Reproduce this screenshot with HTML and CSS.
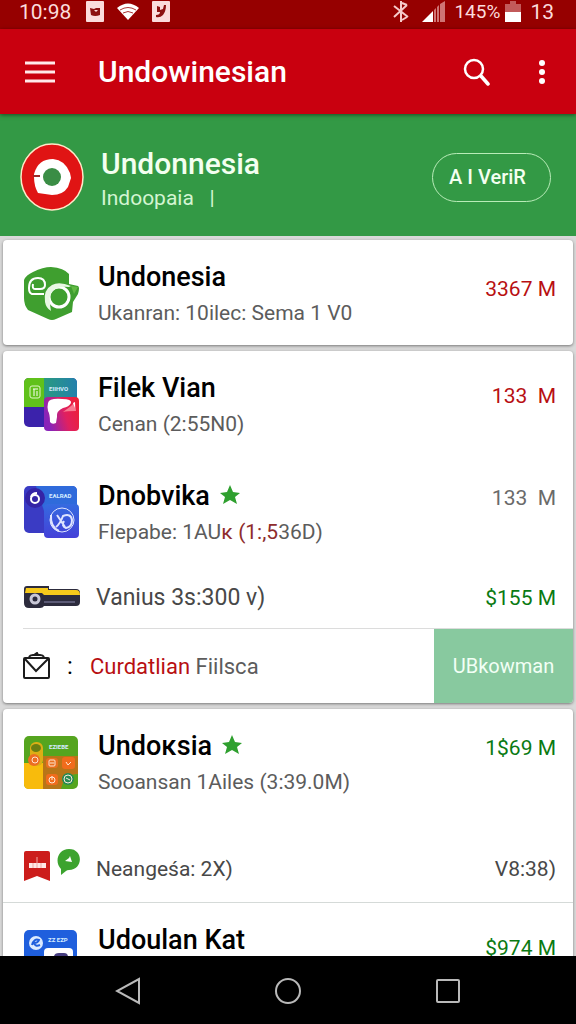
FILE: index.html
```html
<!DOCTYPE html>
<html lang="id">
<head>
    <meta charset="UTF-8">
    <meta name="viewport" content="width=device-width, initial-scale=1.0">
    <title>Undowinesian</title>
    <link rel="stylesheet" href="styles.css">
</head>
<body>
    <div class="status-bar">
        <span class="clock">10:98</span>
        <svg class="status-doc" width="18" height="21" viewBox="0 0 18 21"><rect width="18" height="21" rx="1" fill="#fbdcdc"/><path d="M4 7l4 1 2-1h4v7q-5 2-9 0z" fill="#8c1010"/><path d="M8 9l2 2 2-2" fill="#fbdcdc"/></svg>
        <svg class="status-wifi" width="22" height="18" viewBox="0 0 22 18"><path d="M0 5Q11-4 22 5L11 17z" fill="#fff"/><path d="M3 7q8-5 16 0M6 10q5-3 10 0" fill="none" stroke="#a33" stroke-width="1"/></svg>
        <svg width="18" height="21" viewBox="0 0 18 21"><rect width="18" height="21" rx="1" fill="#fbdcdc"/><path d="M5 5l3 1v3l3-1 1-4h2q0 6-3 10-3 3-7 2v-2q4 0 4-3l-3 0z" fill="#8c1010"/></svg>
        <span class="spacer"></span>
        <svg width="18" height="22" viewBox="0 0 18 22" fill="none" stroke="#f6caca" stroke-width="2"><path d="M9 0v21M2 5l14 11M2 16L15 4M10 2l5 2M10 19l5-3" /></svg>
        <svg class="status-signal" width="23" height="21" viewBox="0 0 23 21"><path d="M0 21L11 10v11z" fill="#fff"/><path d="M12 21V9l2-2v14zM15 21V6l2-2v17zM18 21V3l5-3v21z" fill="#cf7474"/></svg>
        <span class="battery-text">145%</span>
        <svg class="status-battery" width="16" height="21" viewBox="0 0 16 21"><path d="M5 0h6v3h5v8H0V3h5z" fill="#c25a5a"/><path d="M0 11h16v10H0z" fill="#fff"/></svg>
        <span>13</span>
    </div>

    <header class="app-bar">
        <button class="icon-btn" aria-label="Menu">
            <svg width="30" height="22" viewBox="0 0 30 22" stroke="#ffe9ea" stroke-width="3"><path d="M0 2h30M0 11h30M0 20h30"/></svg>
        </button>
        <h1>Undowinesian</h1>
        <button class="icon-btn search-btn" aria-label="Search">
            <svg width="28" height="28" viewBox="0 0 28 28" fill="none" stroke="#fff" stroke-width="2.5" stroke-linecap="round"><circle cx="11" cy="11" r="9"/><path d="M18 18l7 8" stroke-width="3.5"/></svg>
        </button>
        <button class="icon-btn" aria-label="More">
            <svg width="6" height="26" viewBox="0 0 6 26" fill="#fff"><circle cx="3" cy="4" r="3"/><circle cx="3" cy="13" r="3"/><circle cx="3" cy="22" r="3"/></svg>
        </button>
    </header>

    <section class="profile">
        <svg width="64" height="68" viewBox="0 0 64 68">
            <ellipse cx="32" cy="34" rx="31" ry="33" fill="#e01414" stroke="#ffe9c8" stroke-width="1.5"/>
            <path d="M14 31q4-15 19-15 12 1 17 14l1 5-3 9q-5 8-16 8l-14-2q-4-7-4-16z" fill="#fff"/>
            <path d="M13 33h7" stroke="#9c2a2a" stroke-width="2"/>
            <circle cx="32" cy="34" r="9" fill="#3a8d45"/>
        </svg>
        <div class="profile-text">
            <h2>Undonnesia</h2>
            <p>Indoopaia &nbsp; |</p>
        </div>
        <button class="verify-btn">A I VeriR</button>
    </section>

    <main class="list">
        <article class="card card-single">
            <div class="row">
                <svg class="thumb" width="56" height="54" viewBox="0 0 56 54">
                    <path d="M27 0Q40 1 45 7v10l9 2q2 1 0 8l-5 8-1 10-16 7q-4 2-8 0L4 43Q0 38 0 31V13Q2 8 9 5q10-5 18-5z" fill="#3f9f2f"/>
                    <path d="M47 19l7 1-4 7z" fill="#62b944"/>
                    <path d="M20 27H8q-3-1-3-6 0-10 9-10 7 0 7 7 0 4-5 4h-5q-3 0-2-5" fill="none" stroke="#fff" stroke-width="2"/>
                    <circle cx="35" cy="30" r="10" fill="none" stroke="#fff" stroke-width="3"/>
                    <path d="M47 19q-12-5-19-1-9 5-7 17 1 6 6 9-1-5-1-9-2-9 5-13 6-3 14-2z" fill="#e8f7e3"/>
                </svg>
                <div class="row-text">
                    <h3>Undonesia</h3>
                    <p>Ukanran: 10ilec: Sema 1 V0</p>
                </div>
                <span class="amount amount-mid red">3367 M</span>
            </div>
        </article>

        <article class="card">
            <div class="row">
                <svg class="thumb" width="56" height="54" viewBox="0 0 56 54">
                    <defs>
                        <linearGradient id="teal" x1="0" x2="1"><stop offset="0" stop-color="#2a9a80"/><stop offset="1" stop-color="#2380ac"/></linearGradient>
                        <linearGradient id="pink" x1="0" x2="1" y1="0.3"><stop offset="0" stop-color="#8a24b8"/><stop offset="0.5" stop-color="#e02060"/><stop offset="1" stop-color="#f02030"/></linearGradient>
                    </defs>
                    <rect width="53" height="49" rx="5" fill="#3b22ab"/>
                    <path d="M20 0h28q5 0 5 5v24H20z" fill="url(#teal)"/>
                    <path d="M5 0h15v29H0V5q0-5 5-5z" fill="#60c11b"/>
                    <rect x="6" y="8" width="10" height="12" rx="2" fill="none" stroke="#dff7c8"/><path d="M9 11h5M10 11v7M13 13v5" stroke="#fff" stroke-width="1"/>
                    <text class="thumb-label" x="25" y="13">EIIHVO</text>
                    <rect x="20" y="19" width="35" height="34" rx="4" fill="url(#pink)"/>
                    <path d="M24 25q1-5 14-4 10 0 9 4-2 4-8 5-7 3-6 9l-1 6q-4 2-6-1 0-8-2-11-1-4 0-8z" fill="#fff"/><path d="M47 28l4-4 1 9q-9 0-13 1z" fill="#f87b92"/><path d="M49 25l2-1v6z" fill="#fff"/>
                </svg>
                <div class="row-text">
                    <h3>Filek Vian</h3>
                    <p>Cenan (2:55N0)</p>
                </div>
                <span class="amount amount-low red">133 &nbsp;M</span>
            </div>
            <div class="row">
                <svg class="thumb" width="56" height="54" viewBox="0 0 56 54">
                    <defs><linearGradient id="blue" x1="0" x2="0" y1="0" y2="1"><stop offset="0" stop-color="#356be0"/><stop offset="1" stop-color="#4440d8"/></linearGradient></defs>
                    <rect width="53" height="47" rx="5" fill="#3a3bc4"/>
                    <path d="M12 0h36q5 0 5 5v20H20z" fill="#2f6bdb"/>
                    <circle cx="11" cy="12" r="10" fill="#3424a6"/><circle cx="11" cy="13" r="4" fill="none" stroke="#fff" stroke-width="2"/><path d="M7 11q1-4 6-4" fill="none" stroke="#fff" stroke-width="2"/>
                    <text class="thumb-label" x="25" y="12">EALRAD</text>
                    <rect x="20" y="18" width="35" height="34" rx="4" fill="url(#blue)"/>
                    <g fill="none" stroke="#dfe4ff" stroke-width="2"><circle cx="38" cy="34" r="12" stroke-width="1"/><path d="M27 29q-1 12 8 16M33 29l8 12M32 41q4-3 7-11 8-3 9 4 0 7-6 8-5-2-2-7"/></g>
                </svg>
                <div class="row-text">
                    <h3>Dnobvika <svg class="star" width="20" height="20" viewBox="0 0 20 20"><path d="M10 0l3 7 7 1-5 4 2 7-7-4-7 4 2-7-5-4 7-1z"/></svg></h3>
                    <p>Flepabe: 1AU<span class="red-soft">ĸ (1:,5</span>36D)</p>
                </div>
                <span class="amount">133 &nbsp;M</span>
            </div>
            <div class="row row-small">
                <svg width="56" height="24" viewBox="0 0 56 24">
                    <path d="M3 0h22v3h27q4 0 4 4v9q0 4-4 4H20q-1 2-4 2H5q-5 0-5-5V3q0-3 3-3z" fill="#2c2b3d"/>
                    <path d="M2 2h22v2h28q4 0 4 5H20l-2-2H1z" fill="#f6c91b"/>
                    <path d="M20 16h31" stroke="#8b8bb0"/>
                    <circle cx="11" cy="13" r="4" fill="#2c2b3d" stroke="#c8c7d6" stroke-width="3"/>
                </svg>
                <p class="line-text">Vanius 3s:300 ν)</p>
                <span class="amount green">$155 M</span>
            </div>
            <div class="row action-row">
                <svg width="27" height="28" viewBox="0 0 27 28" fill="none" stroke="#1c1c1c" stroke-width="2"><rect x="1" y="6" width="25" height="20" rx="1"/><path d="M2 7l11 12L25 7M6 5q1-2 4-2h7q3 0 4 2M11 3l3-2 1 2"/></svg>
                <span class="colon">:</span>
                <p class="action-text"><span class="red">Curdatlian</span> Fiilsca</p>
                <button class="action-btn">UBkowman</button>
            </div>
        </article>

        <article class="card">
            <div class="row">
                <svg class="thumb" width="56" height="54" viewBox="0 0 56 54">
                    <rect width="54" height="53" rx="5" fill="#55a51f"/>
                    <path d="M0 27h19v26H5q-5 0-5-5z" fill="#f8bb0c"/>
                    <path d="M19 20h35v18q-14 0-17 15H19z" fill="#b87518"/>
                    <rect x="6" y="6" width="13" height="24" rx="6" fill="#dcae15"/>
                    <ellipse cx="12" cy="12" rx="5" ry="4" fill="#6b7f12"/><circle cx="10" cy="24" r="6" fill="#ec6e21"/><circle cx="11" cy="24" r="3" fill="none" stroke="#ffe1cf"/>
                    <text class="thumb-label" x="25" y="13">EZIEBE</text>
                    <rect x="22" y="22" width="12" height="10" rx="3" fill="#e9701f"/><rect x="38" y="21" width="13" height="12" rx="3" fill="#f06c1c"/><rect x="22" y="38" width="12" height="11" rx="3" fill="#f06c1c"/><circle cx="44" cy="43" r="6" fill="#278b55"/>
                    <g fill="none" stroke="#ffe9d8"><rect x="25" y="24" width="6" height="6" rx="1"/><path d="M26 27h4M42 26l2 3 3-3"/><circle cx="28" cy="44" r="3"/><circle cx="44" cy="43" r="4"/><path d="M28 40v4M42 42l4 2"/></g>
                </svg>
                <div class="row-text">
                    <h3>Undoĸsia <svg class="star" width="20" height="20" viewBox="0 0 20 20"><path d="M10 0l3 7 7 1-5 4 2 7-7-4-7 4 2-7-5-4 7-1z"/></svg></h3>
                    <p>Sooansan 1Ailes (3:39.0M)</p>
                </div>
                <span class="amount green">1$69 M</span>
            </div>
            <div class="row row-message">
                <svg class="badges" width="56" height="34" viewBox="0 0 56 34">
                    <path d="M2 3h22q2 0 2 2v28l-13-5-13 5V5q0-2 2-2z" fill="#cc1d1b"/>
                    <path d="M5 15h17v5H5z" fill="#ffe8e6"/><path d="M13 9v11M9 15v5M17 15v5" stroke="#f0aaa6"/>
                    <path d="M45 1c15 0 14 21 0 21q-2 0-3 1l-5 4v-6C30 14 34 1 45 1z" fill="#3ca32e"/>
                    <path d="M41 13l4-3 1-2 2 6z" fill="#fff"/>
                </svg>
                <p class="line-text">Neangeśa: 2X)</p>
                <span class="amount grey-dark">V8:38)</span>
            </div>
            <div class="row row-divided">
                <svg class="thumb" width="56" height="54" viewBox="0 0 56 54">
                    <rect width="53" height="53" rx="5" fill="#1f5fdd"/>
                    <circle cx="12" cy="13" r="7" fill="#dcebff"/><path d="M8 15q2-7 7-5-1 3-5 3 1 4 6 2" fill="none" stroke="#1f5fdd" stroke-width="2"/>
                    <text class="thumb-label" x="24" y="12">ZZ EZP</text>
                    <rect x="20" y="18" width="29" height="34" rx="4" fill="#fff"/><path d="M30 27q0-4 5-4h5q4 0 4 4z" fill="#453c7e"/>
                </svg>
                <div class="row-text">
                    <h3>Udoulan Kat</h3>
                </div>
                <span class="amount amount-low green">$974 M</span>
            </div>
        </article>
    </main>

    <nav class="nav-bar">
        <button class="icon-btn" aria-label="Back"><svg width="26" height="28" viewBox="0 0 26 28" fill="none" stroke="#b9b9b9" stroke-width="2"><path d="M24 2v24L2 14z"/></svg></button>
        <button class="icon-btn" aria-label="Home"><svg width="28" height="28" viewBox="0 0 28 28" fill="none" stroke="#b9b9b9" stroke-width="2"><circle cx="14" cy="14" r="12"/></svg></button>
        <button class="icon-btn" aria-label="Recent apps"><svg width="26" height="26" viewBox="0 0 26 26" fill="none" stroke="#b9b9b9" stroke-width="2"><rect x="2" y="2" width="22" height="22" rx="1"/></svg></button>
    </nav>
</body>
</html>
```
FILE: styles.css
```css
:root {
    --red: #c9000f;
    --red-dark: #960000;
    --green: #339945;
    --green-text: #0a7a12;
    --red-text: #b80f12;
    --grey-text: #5c5c5c;
}
* {
    box-sizing: border-box;
}
body {
    margin: 0;
    height: 100vh;
    display: flex;
    flex-direction: column;
    overflow: hidden;
    font-family: Roboto, "Liberation Sans", sans-serif;
    background: #d9d9d9;
    color: #000;
}
h1, h2, h3, p {
    margin: 0;
}
h1, h2, h3 {
    font-size: 27px;
    font-weight: 500;
}
svg {
    display: block;
    flex: none;
}
button {
    font-family: inherit;
    cursor: pointer;
}
.icon-btn {
    padding: 0;
    border: 0;
    background: none;
}

/* Status bar */
.status-bar {
    flex: none;
    display: flex;
    align-items: center;
    height: 29px;
    padding: 0 22px 6px 19px;
    background: var(--red-dark);
    color: #fbdcdc;
    font-size: 21px;
    line-height: 24px;
}
.status-doc {
    margin-left: 15px;
}
.status-wifi {
    margin: 0 13px;
}
.spacer {
    flex: 1;
}
.status-signal {
    margin: 0 9px 0 12px;
}
.battery-text {
    font-size: 19px;
}
.status-battery {
    margin: 0 9px 0 5px;
}

/* App bar */
.app-bar {
    flex: none;
    display: flex;
    align-items: center;
    height: 85px;
    padding: 0 31px 0 25px;
    background: var(--red);
    color: #fff;
    box-shadow: 0 1px 4px rgba(0, 0, 0, 0.5);
    z-index: 1;
}
.app-bar h1 {
    flex: 1;
    margin-left: 43px;
    font-size: 30px;
}
.search-btn {
    margin-right: 48px;
}

/* Profile */
.profile {
    flex: none;
    display: flex;
    align-items: center;
    height: 122px;
    padding: 4px 25px 0 20px;
    background: var(--green);
    color: #f3fff0;
}
.profile-text {
    flex: 1;
    margin-left: 17px;
    padding-top: 8px;
    line-height: 34px;
}
.profile-text h2 {
    font-size: 30px;
}
.profile-text p {
    font-size: 21px;
    color: #d3f5d2;
}
.verify-btn {
    width: 119px;
    height: 49px;
    border: 1px solid #b9ecb8;
    border-radius: 25px;
    background: none;
    color: #f3fff0;
    font-size: 20px;
    font-weight: 500;
    padding: 0 8px 0 0;
}

/* Cards */
.list {
    flex: 1;
    min-height: 0;
    overflow: hidden;
    display: flex;
    flex-direction: column;
    gap: 6px;
    padding: 4px 3px 0;
}
.card {
    flex: none;
    background: #fff;
    border-radius: 4px;
    box-shadow: 0 1px 3px rgba(0, 0, 0, 0.45);
    overflow: hidden;
}
.row {
    display: flex;
    align-items: flex-start;
    padding: 19px 17px 17px 21px;
}
.card-single .row {
    padding-bottom: 14px;
}
.thumb {
    margin-top: 8px;
}
.thumb-label {
    font-size: 6px;
    font-weight: 700;
    fill: #d5ecff;
}
.row-text {
    flex: 1;
    margin-left: 18px;
    line-height: 36px;
    white-space: nowrap;
}
.row-text p {
    font-size: 21px;
    color: var(--grey-text);
}
.star {
    display: inline-block;
    margin-left: 3px;
    fill: #2fa02f;
}
.amount {
    margin-top: 2px;
    font-size: 21px;
    line-height: 36px;
    color: #6a6a6a;
}
.amount-low {
    margin-top: 8px;
}
.amount-mid {
    margin-top: 12px;
}
.red {
    color: var(--red-text);
}
.red-soft {
    color: #8e2c2c;
}
.green {
    color: var(--green-text);
}
.grey-dark {
    color: #484848;
}
.row-small, .row-message, .action-row {
    align-items: center;
}
.row-small {
    height: 61px;
    padding-top: 0;
    padding-bottom: 0;
}
.line-text {
    flex: 1;
    margin-left: 16px;
    font-size: 23px;
    color: #484848;
    white-space: nowrap;
}
.row-small .amount, .row-message .amount {
    margin-top: 0;
}
.row-message {
    margin-top: 19px;
    height: 66px;
    padding-top: 0;
    padding-bottom: 0;
}
.row-message .line-text {
    font-size: 21px;
}
.badges {
    margin-bottom: 8px;
}
.action-row {
    height: 75px;
    margin-left: 20px;
    padding: 0;
    border-top: 1px solid #dcdcdc;
}
.colon {
    width: 40px;
    text-align: center;
    font-size: 24px;
}
.action-text {
    flex: 1;
    font-size: 22px;
    color: var(--grey-text);
    white-space: nowrap;
}
.action-btn {
    align-self: stretch;
    width: 139px;
    padding: 0;
    border: 0;
    background: #88c99f;
    color: #f2fff5;
    font-size: 20px;
}
.row-divided {
    border-top: 1px solid #d5dad8;
}

/* System navigation */
.nav-bar {
    flex: none;
    display: flex;
    align-items: center;
    justify-content: space-between;
    height: 68px;
    padding: 2px 20% 0;
    background: #000;
    z-index: 1;
}
```
